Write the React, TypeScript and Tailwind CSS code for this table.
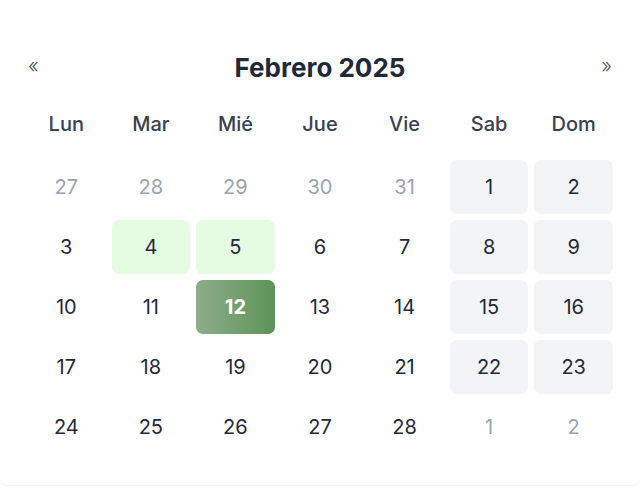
import React from "react";

type Day = { n: number; muted?: boolean; weekend?: boolean; range?: boolean; selected?: boolean };

const weekdays = ["Lun", "Mar", "Mié", "Jue", "Vie", "Sab", "Dom"];

function buildDays(): Day[] {
  const days: Day[] = [];
  const lead = [27, 28, 29, 30, 31];
  lead.forEach((n) => days.push({ n, muted: true }));
  for (let n = 1; n <= 28; n++) {
    const col = (days.length % 7);
    days.push({
      n,
      weekend: col >= 5 && n <= 23,
      range: n === 4 || n === 5,
      selected: n === 12,
    });
  }
  days.push({ n: 1, muted: true });
  days.push({ n: 2, muted: true });
  return days;
}

function DayCell({ d }: { d: Day }) {
  let cls = "h-[54px] flex items-center justify-center rounded-[7px] text-[20px] ";
  if (d.selected) cls += "bg-gradient-to-r from-[#8eac8c] to-[#5b9456] text-white font-bold";
  else if (d.range) cls += "bg-[#e5fbe2] text-[#1f2937]";
  else if (d.weekend) cls += "bg-[#f3f4f6] text-[#1f2937]";
  else if (d.muted) cls += "text-[#9ca3af]";
  else cls += "text-[#1f2937]";
  return <div className={cls}>{d.n}</div>;
}

export default function App() {
  const days = buildDays();
  return (
    <div className="w-[640px] h-[500px] bg-white font-['Inter',sans-serif]">
      <div className="h-[485px] bg-white rounded-b-lg shadow-[0_1px_2px_rgba(0,0,0,0.06)] px-[27px] pt-[47px]">
        <div className="h-10 flex items-center justify-between text-[#4b5563]">
          <button className="text-[20px] font-light leading-none pl-[1px] pb-[2px]">«</button>
          <div className="text-[26px] font-bold text-[#1f2937] tracking-[0px]">Febrero 2025</div>
          <button className="text-[20px] font-light leading-none pr-[1px] pb-[2px]">»</button>
        </div>
        <div className="mt-[17px] grid grid-cols-7 gap-x-[6px] h-10 items-center">
          {weekdays.map((w) => (
            <div key={w} className="text-center text-[20px] font-medium text-[#374151]">{w}</div>
          ))}
        </div>
        <div className="mt-4 grid grid-cols-7 gap-[6px]">
          {days.map((d, i) => (
            <DayCell key={i} d={d} />
          ))}
        </div>
      </div>
    </div>
  );
}
